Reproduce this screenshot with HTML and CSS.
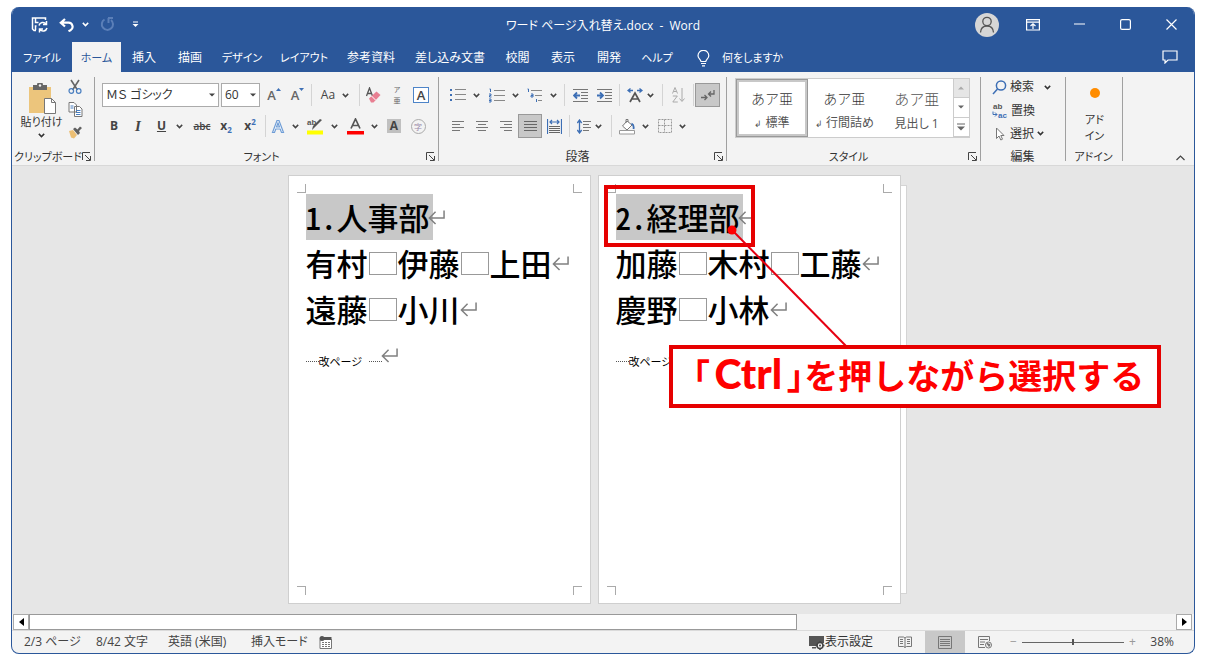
FILE: index.html
```html
<!DOCTYPE html>
<html lang="ja">
<head>
<meta charset="utf-8">
<title>ワード ページ入れ替え.docx - Word</title>
<link rel="stylesheet" href="styles.css">
</head>
<body>
<svg class="defs" aria-hidden="true">
  <symbol id="chev" viewBox="0 0 7 5"><path d="M.8 .9 3.5 3.6 6.200 .9" fill="none" stroke="currentColor" stroke-width="1.500"/></symbol>
  <symbol id="tri" viewBox="0 0 6 4"><path d="M0 .5h6L3 3.500z" fill="currentColor"/></symbol>
  <symbol id="launch" viewBox="0 0 9 9"><path d="M.5 8V.5H8M3 3l5 5M8.500 4v4.500H4" fill="none" stroke="#444"/></symbol>
  <symbol id="ret" viewBox="0 0 18 16"><path d="M17 1v8H2M8 2.500 1.500 9 8 15.500" fill="none" stroke="#808080" stroke-width="1.600"/></symbol>
</svg>
<div class="window">
  <header class="titlebar">
    <div class="quick">
      <button aria-label="上書き保存"><svg width="18" height="18" viewBox="0 0 18 18" fill="none" stroke="#fff" stroke-width="1.500"><path d="M5 14.500H3l-1.500-1.500V2h13v2M4.500 2v4.500h3M4.500 14v-4h1"/><path d="M8 9.500a4 4 0 0 1 7-1.500M15.500 5v3.500H12M16 12a4 4 0 0 1-7 1.500M8.500 16.500V13H12"/></svg></button>
      <button aria-label="元に戻す"><svg width="16" height="14" viewBox="0 0 16 14" fill="none" stroke="#fff" stroke-width="2.200"><path d="M6 1 1.800 4.700 6 8.500M2 4.700h7.500a4 4 0 0 1 2 7.500l-2 1"/></svg></button>
      <button aria-label="元に戻すの一覧"><svg class="chev"><use href="#chev"/></svg></button>
      <button aria-label="繰り返し"><svg width="15" height="15" viewBox="0 0 15 15" fill="none" stroke="#5b7fb8" stroke-width="2"><path d="M4.500 2.500a5.600 5.600 0 1 0 6.500.5M8 1h5M8.500 1v5"/></svg></button>
      <button aria-label="クイック アクセスの設定"><svg width="7" height="7" viewBox="0 0 7 7"><path d="M1 1h5" stroke="#fff"/><path d="M.5 3h6l-3 3z" fill="#fff"/></svg></button>
    </div>
    <h1 class="title">ワード ページ入れ替え.docx&nbsp; -&nbsp; Word</h1>
    <div class="controls">
      <button aria-label="アカウント"><svg width="24" height="24" viewBox="0 0 24 24"><circle cx="12" cy="12" r="12" fill="#d6d6d6"/><g fill="none" stroke="#555" stroke-width="1.300"><circle cx="12" cy="8.500" r="4.200"/><path d="M5.500 19.500c.3-4.200 2.800-6.500 6.500-6.500s6.200 2.300 6.500 6.500"/></g></svg></button>
      <button aria-label="リボンの表示オプション"><svg width="14" height="12" viewBox="0 0 14 12" fill="none" stroke="#fff" stroke-width="1.200"><path d="M.6.600h12.800v10.400H.6zM.6 3.200h12.800M7 10V5M4.500 7 7 4.800 9.500 7"/></svg></button>
      <button aria-label="最小化"><svg width="11" height="11" viewBox="0 0 11 11"><path d="M0 5h11" stroke="#fff" stroke-width="1.200"/></svg></button>
      <button aria-label="最大化"><svg width="11" height="11" viewBox="0 0 11 11"><rect x=".6" y=".6" width="9.800" height="9.800" rx="1.500" fill="none" stroke="#fff" stroke-width="1.200"/></svg></button>
      <button aria-label="閉じる"><svg width="11" height="11" viewBox="0 0 11 11"><path d="M.5.500l10 10M10.500.500l-10 10" stroke="#fff" stroke-width="1.200"/></svg></button>
    </div>
  </header>
  <nav class="tabs">
    <div class="tablist">
      <button class="kana">ファイル</button><button class="active kana">ホーム</button><button>挿入</button><button>描画</button><button class="kana">デザイン</button><button class="kana">レイアウト</button><button>参考資料</button><button>差し込み文書</button><button>校閲</button><button>表示</button><button>開発</button><button class="kana">ヘルプ</button>
      <button class="tell kana"><svg width="13" height="17" viewBox="0 0 13 17" fill="none" stroke="#fff" stroke-width="1.200"><path d="M4 11.500C3.800 9.500 1 8.500 1 5.700a5.300 5.300 0 0 1 10.800 0c0 2.800-2.800 3.800-3 5.800zM4 13.500h5M5 15.800h3"/></svg>何をしますか</button>
    </div>
    <button class="comment" aria-label="コメント"><svg width="16" height="14" viewBox="0 0 16 14" fill="none" stroke="#fff" stroke-width="1.200"><path d="M1 1h14v9H6l-3 3v-3H1z"/></svg></button>
  </nav>

  <section class="ribbon">
    <div class="group clipboard">
      <div class="clip">
        <button class="paste kana"><svg width="30" height="31" viewBox="0 0 30 31"><path d="M2 4h22v26H2z" fill="#ecc57c"/><path d="M6 2h4a3 3 0 0 1 6 0h4v5H6z" fill="#666"/><circle cx="13" cy="2.500" r="1.200" fill="#f3f3f3"/><path d="M17.500 15.500h7l4 4v11h-11z" fill="#fff" stroke="#777"/><path d="M24.500 15.500v4h4" fill="none" stroke="#777"/></svg>貼り付け<svg class="chev"><use href="#chev"/></svg></button>
        <div class="stack">
          <button aria-label="切り取り"><svg width="14" height="16" viewBox="0 0 14 16" fill="none" stroke-width="1.600"><path d="M3 1l6.500 10M11 1 4.500 11" stroke="#666"/><circle cx="3.300" cy="12" r="2.300" stroke="#4a7fc0" stroke-width="1.200"/><circle cx="10.700" cy="12" r="2.300" stroke="#4a7fc0" stroke-width="1.200"/></svg></button>
          <button aria-label="コピー"><svg width="15" height="15" viewBox="0 0 15 15" fill="#fff" stroke="#777"><path d="M1 .5h5l2.500 2.500v7H1zM6.500 4.500h5l2.500 2.500v7.500H6.500z"/><path d="M2.500 4h3M2.500 6h3M8 8.500h4.500M8 10.500h4.500M8 12.500h4.500" stroke="#4a7fc0"/></svg></button>
          <button aria-label="書式のコピー"><svg width="15" height="13" viewBox="0 0 15 13"><path d="M1 5l4-1 4 5-3 3.500-3-1z" fill="#ecbf74"/><path d="M5 3l2-1.500 2.500 2 2.500-3L14 2l-3 3 1 2-2 2z" fill="#606060"/></svg></button>
        </div>
      </div>
      <div class="glabel kana"><span>クリップボード</span><button aria-label="クリップボードの詳細"><svg class="launch"><use href="#launch"/></svg></button></div>
    </div>

    <div class="group font">
      <div class="rows">
        <div class="row font1">
          <label class="combo"><select aria-label="フォント"><option>ＭＳ ゴシック</option></select><svg class="tri"><use href="#tri"/></svg></label>
          <label class="combo"><select aria-label="フォント サイズ"><option>60</option></select><svg class="tri"><use href="#tri"/></svg></label>
          <button class="grow" aria-label="拡大">A<svg width="5" height="14" viewBox="0 0 5 14"><path d="M0 3 2.500 0 5 3z" fill="#3d6fb5"/></svg></button>
          <button class="grow" aria-label="縮小">A<svg width="5" height="14" viewBox="0 0 5 14"><path d="M0 0h5L2.500 3z" fill="#3d6fb5"/></svg></button>
          <i class="sep"></i>
          <button>Aa<svg class="chev"><use href="#chev"/></svg></button>
          <i class="sep"></i>
          <button aria-label="書式のクリア"><svg width="16" height="16" viewBox="0 0 16 16"><path d="M1.500 9 4.500 1l3 8M2.500 6.500h4" fill="none" stroke="#555" stroke-width="1.300"/><path d="M4 11.500 11.500 4.500l4 3.500L8.500 15.500H6z" fill="#e87f92"/><path d="M6.500 9l4 4" stroke="#fff"/></svg></button>
          <button class="ruby" aria-label="ルビ"><span>ア</span><span>亜</span></button>
          <button aria-label="囲み線"><span class="boxed">A</span></button>
        </div>
        <div class="row font2">
          <button class="b">B</button>
          <button class="it">I</button>
          <button class="wide"><u class="b">U</u><svg class="chev"><use href="#chev"/></svg></button>
          <button class="strike">abc</button>
          <button class="b xx">x<sub>2</sub></button>
          <button class="b xx">x<sup>2</sup></button>
          <i class="sep"></i>
          <button aria-label="文字の効果"><svg width="14" height="15" viewBox="0 0 14 15"><path d="M1.500 13.500 6 1.500h2l4.500 12h-2l-1.300-3.500H4.800l-1.300 3.500zM5.500 8h3L7 4z" fill="#fff" stroke="#6f9dd6" stroke-width="1.200"/></svg><svg class="chev"><use href="#chev"/></svg></button>
          <button aria-label="蛍光ペン"><svg width="18" height="18" viewBox="0 0 18 18"><text x="1" y="8" class="abtext">ab</text><path d="M16 3 9 10l-3 3 1-4 7-7z" fill="#555"/><path d="M1 13.500h16v4H1z" fill="#ff0"/></svg><svg class="chev"><use href="#chev"/></svg></button>
          <button aria-label="フォントの色"><svg width="17" height="17" viewBox="0 0 17 17"><path d="M4 10.500 8.500 1 13 10.500M5.500 7.500h6" fill="none" stroke="#555" stroke-width="1.700"/><path d="M0 13h17v3.500H0z" fill="#f00"/></svg><svg class="chev"><use href="#chev"/></svg></button>
          <button aria-label="網かけ"><span class="shade">A</span></button>
          <button aria-label="囲い文字"><span class="circle">字</span></button>
        </div>
      </div>
      <div class="glabel kana"><span>フォント</span><button aria-label="フォントの詳細"><svg class="launch"><use href="#launch"/></svg></button></div>
    </div>

    <div class="group para">
      <div class="rows">
        <div class="row para1">
          <button aria-label="箇条書き"><svg width="16" height="14" viewBox="0 0 16 14"><path d="M5 1.500h11M5 6.500h11M5 11.500h11" stroke="#888"/><path d="M0 1h2v2H0zM0 6h2v2H0zM0 11h2v2H0z" fill="#3d6fb5"/></svg><svg class="chev"><use href="#chev"/></svg></button>
          <button aria-label="段落番号"><svg width="16" height="15" viewBox="0 0 16 15"><path d="M5 2.500h11M5 7.500h11M5 12.500h11" stroke="#888"/><path d="M.5 1h1v3M0 6h2v1.500H.5V9h2M0 11h2v3H0M0 12.500h2" fill="none" stroke="#3d6fb5"/></svg><svg class="chev"><use href="#chev"/></svg></button>
          <button aria-label="アウトライン"><svg width="16" height="14" viewBox="0 0 16 14"><path d="M4 2.500h11M8 7.500h7M11 12.500h4" stroke="#888"/><path d="M.5 1h1v3M4 6h2v3H4V7.500h2M9.500 11v3" fill="none" stroke="#3d6fb5"/></svg><svg class="chev"><use href="#chev"/></svg></button>
          <i class="sep"></i>
          <button aria-label="インデントを減らす"><svg width="15" height="13" viewBox="0 0 15 13"><path d="M0 .5h15M8 3.500h7M8 6.500h7M8 9.500h7M0 12.500h15" stroke="#777"/><path d="M7 6.500H1.500M4 3.500l-3 3 3 3" fill="none" stroke="#3d6fb5" stroke-width="1.800"/></svg></button>
          <button aria-label="インデントを増やす"><svg width="15" height="13" viewBox="0 0 15 13"><path d="M0 .5h15M8 3.500h7M8 6.500h7M8 9.500h7M0 12.500h15" stroke="#777"/><path d="M0 6.500h5.500M3 3.500l3 3-3 3" fill="none" stroke="#3d6fb5" stroke-width="1.800"/></svg></button>
          <i class="sep"></i>
          <button class="tight" aria-label="拡張書式"><svg width="16" height="15" viewBox="0 0 16 15"><path d="M3 14 8 5l5 9M4.500 11h7" fill="none" stroke="#555" stroke-width="1.700"/><path d="M6 2.500H1M3.500 .5l-2.500 2 2.500 2M10 2.500h5M12.500.5l2.500 2-2.500 2" fill="none" stroke="#3d6fb5" stroke-width="1.300"/></svg><svg class="chev"><use href="#chev"/></svg></button>
          <i class="sep"></i>
          <button aria-label="並べ替え"><svg width="14" height="16" viewBox="0 0 14 16" fill="none" stroke="#aaa"><path d="M.5 6.500 3 .5l2.500 6M1.500 4.500h3M.8 9h4.500L.8 15h5M10 1v13M7.500 11.500 10 14.500l2.500-3"/></svg></button>
          <i class="sep"></i>
          <button class="pressed" aria-label="編集記号の表示"><svg width="14" height="12" viewBox="0 0 14 12" fill="none" stroke="#666" stroke-width="1.300"><path d="M13 1v4H8M10 2.500 7.500 5 10 7.500M0 8.500h6M3.500 6 6 8.500 3.500 11"/></svg></button>
        </div>
        <div class="row para2">
          <button aria-label="左揃え"><svg width="12" height="10" viewBox="0 0 12 10"><path d="M0 .5h12M0 3.500h8M0 6.500h12M0 9.500h8" stroke="#777"/></svg></button>
          <button aria-label="中央揃え"><svg width="12" height="10" viewBox="0 0 12 10"><path d="M0 .5h12M2 3.500h8M0 6.500h12M2 9.500h8" stroke="#777"/></svg></button>
          <button aria-label="右揃え"><svg width="12" height="10" viewBox="0 0 12 10"><path d="M0 .5h12M4 3.500h8M0 6.500h12M4 9.500h8" stroke="#777"/></svg></button>
          <button class="pressed" aria-label="両端揃え"><svg width="13" height="10" viewBox="0 0 13 10"><path d="M0 .5h13M0 3.500h13M0 6.500h13M0 9.500h13" stroke="#666"/></svg></button>
          <button aria-label="均等割り付け"><svg width="15" height="15" viewBox="0 0 15 15"><path d="M.5 0v15M14.500 0v15M3 3h9M5 1 3 3l2 2M10 1l2 2-2 2" fill="none" stroke="#3d6fb5" stroke-width="1.200"/><path d="M2 7.500h11M2 9.500h11M2 11.500h11M2 13.500h11" stroke="#666"/></svg></button>
          <i class="sep"></i>
          <button class="tight" aria-label="行間"><svg width="14" height="15" viewBox="0 0 14 15"><path d="M6 2.500h8M6 5.500h6M6 8.500h8M6 11.500h6" stroke="#777"/><path d="M2.500 1.500v12M.3 4l2.200-3 2.200 3M.3 11l2.200 3 2.200-3" fill="none" stroke="#3d6fb5" stroke-width="1.300"/></svg><svg class="chev"><use href="#chev"/></svg></button>
          <i class="sep"></i>
          <button aria-label="塗りつぶし"><svg width="16" height="17" viewBox="0 0 16 17"><path d="M3.500 8 8 3l5 4-5 5zM7 5V1.500h2V4" fill="#fff" stroke="#777"/><path d="M12.500 5.500c2 1 2.500 3 2 5.500" fill="none" stroke="#3d6fb5" stroke-width="1.800"/><path d="M.5 12.500h15v3.500H.5z" fill="#fff" stroke="#999"/></svg><svg class="chev"><use href="#chev"/></svg></button>
          <button aria-label="罫線"><svg width="14" height="14" viewBox="0 0 14 14"><path d="M.5.500h13v13H.5zM6.500 .5v13M.5 6.500h13" fill="none" stroke="#999" stroke-dasharray="2 1"/></svg><svg class="chev"><use href="#chev"/></svg></button>
        </div>
      </div>
      <div class="glabel"><span>段落</span><button aria-label="段落の詳細"><svg class="launch"><use href="#launch"/></svg></button></div>
    </div>

    <div class="group styles">
      <div class="gallery">
        <button class="style picked"><span class="sample">あア亜</span><span><small>↲</small> 標準</span></button>
        <button class="style"><span class="sample">あア亜</span><span><small>↲</small> 行間詰め</span></button>
        <button class="style"><span class="sample big">あア亜</span><span>見出し 1</span></button>
        <div class="spin">
          <button class="off" aria-label="上へ"><svg class="tri up"><use href="#tri"/></svg></button>
          <button aria-label="下へ"><svg class="tri"><use href="#tri"/></svg></button>
          <button aria-label="その他"><svg width="8" height="8" viewBox="0 0 8 8"><path d="M0 1h8" stroke="#666"/><path d="M0 3.500h8l-4 4z" fill="#666"/></svg></button>
        </div>
      </div>
      <div class="glabel kana"><span>スタイル</span><button aria-label="スタイルの詳細"><svg class="launch"><use href="#launch"/></svg></button></div>
    </div>

    <div class="group edit">
      <div class="editlist">
        <button><svg width="15" height="15" viewBox="0 0 15 15" fill="none" stroke="#3d6fb5" stroke-width="1.500"><circle cx="9" cy="5.500" r="4.600"/><path d="M5.500 9 1 14"/></svg>検索<svg class="chev far"><use href="#chev"/></svg></button>
        <button><svg width="16" height="19" viewBox="0 0 16 19"><text x="1" y="8" class="abtext">ab</text><text x="6" y="17" class="abtext blue">ac</text><path d="M1 10.500v3h4M3 11.500l2 2-2 2" fill="none" stroke="#3d6fb5"/></svg>置換</button>
        <button><svg width="15" height="14" viewBox="0 0 15 14"><path d="M4.500 1v10.500l2.500-2.500 1.800 4 1.700-.8L8.800 8.500H12z" fill="#fff" stroke="#777"/></svg>選択<svg class="chev"><use href="#chev"/></svg></button>
      </div>
      <div class="glabel"><span>編集</span></div>
    </div>
    <div class="group addin">
      <button class="addbtn kana"><i class="dot"></i><span>アド<br>イン</span></button>
      <div class="glabel kana"><span>アドイン</span></div>
    </div>
    <button class="collapse" aria-label="リボンを折りたたむ"><svg width="9" height="6" viewBox="0 0 9 6"><path d="M.5 5 4.500 1l4 4" fill="none" stroke="#444" stroke-width="1.200"/></svg></button>
  </section>

  <main class="desk">
    <article class="page">
      <i class="mark tl"></i><i class="mark tr"></i><i class="mark bl"></i><i class="mark br"></i>
      <p><span class="sel">1.人事部</span><svg class="ret over"><use href="#ret"/></svg></p>
      <p>有村<i class="sp"></i>伊藤<i class="sp"></i>上田<svg class="ret"><use href="#ret"/></svg></p>
      <p>遠藤<i class="sp"></i>小川<svg class="ret"><use href="#ret"/></svg></p>
      <p class="break"><i class="dots"></i>改ページ<i class="dots after"></i><svg class="ret up"><use href="#ret"/></svg></p>
    </article>
    <article class="page last">
      <i class="mark tl"></i><i class="mark tr"></i><i class="mark bl"></i><i class="mark br"></i>
      <p><span class="sel">2.経理部</span><svg class="ret over"><use href="#ret"/></svg></p>
      <p>加藤<i class="sp"></i>木村<i class="sp"></i>工藤<svg class="ret"><use href="#ret"/></svg></p>
      <p>慶野<i class="sp"></i>小林<svg class="ret"><use href="#ret"/></svg></p>
      <p class="break"><i class="dots"></i>改ページ</p>
      <div class="frame"></div>
      <svg class="leader" viewBox="0 0 122 122"><path d="M5 5l114 116" stroke="#e60012" stroke-width="2"/><circle cx="5" cy="5" r="4.500" fill="#f00"/></svg>
      <div class="callout"><span class="key">「<b>Ctrl</b>」</span>を押しながら選択する</div>
    </article>
    <div class="behind"></div>
  </main>

  <div class="hscroll">
    <button aria-label="左へスクロール"><svg width="5" height="8" viewBox="0 0 5 8"><path d="M5 0v8L0 4z"/></svg></button>
    <div class="track"><div class="thumb"></div></div>
    <button aria-label="右へスクロール"><svg width="5" height="8" viewBox="0 0 5 8"><path d="M0 0v8l5-4z"/></svg></button>
  </div>

  <footer class="status">
    <span class="s1">2/3 ページ</span><span class="s1">8/42 文字</span><span class="s2">英語 (米国)</span><span class="s3">挿入モード</span>
    <svg width="13" height="13" viewBox="0 0 13 13"><path d="M1 3.500h11.500v9H1z" fill="#fff" stroke="#777"/><path d="M5 1h7.500v3H5z" fill="#555"/><circle cx="3" cy="2.500" r="2.500" fill="#555"/><path d="M3 6.500h8M3 8.500h8M3 10.500h8" stroke="#777" stroke-dasharray="2 1"/></svg>
    <div class="views">
      <button class="disp"><svg width="16" height="15" viewBox="0 0 16 15"><path d="M0 1h15v7h-4l-4 3H0zM3 12h4v1.500H3z" fill="#555"/><circle cx="11" cy="10.500" r="3" fill="#f3f3f3" stroke="#444" stroke-width="1.500"/><circle cx="11" cy="10.500" r="1" fill="#444"/><path d="M11 6v2M11 13v2M6.500 10.500h2M13.500 10.500h2" stroke="#444" stroke-width="1.500"/></svg>表示設定</button>
      <button aria-label="閲覧モード"><svg width="14" height="12" viewBox="0 0 14 12" fill="none" stroke="#777"><path d="M.5 1h5L7 2l1.500-1h5v9.500h-5L7 11.500 5.500 10.500h-5zM7 2v9.500M2 3.500h3M2 5.500h3M2 7.500h3M9 3.500h3M9 5.500h3M9 7.500h3"/></svg></button>
      <button class="current" aria-label="印刷レイアウト"><svg width="14" height="13" viewBox="0 0 14 13" fill="none" stroke="#777"><path d="M.5.500h13v12H.5zM2 3.500h10M2 5.500h10M2 7.500h10M2 9.500h10"/></svg></button>
      <button aria-label="Web レイアウト"><svg width="14" height="13" viewBox="0 0 14 13" fill="none" stroke="#777"><path d="M7 11.500H.5v-11h11V5M2 3.500h8M2 6h5M2 8.500h4"/><circle cx="10.500" cy="9" r="3"/><path d="M9 7.500l3 1-1 2z" fill="#777"/></svg></button>
      <span class="pm">−</span>
      <input type="range" aria-label="ズーム" min="0" max="100" value="50">
      <span class="pm">+</span>
      <span class="pct">38%</span>
    </div>
  </footer>
</div>
</body>
</html>
```
FILE: styles.css
```css
* { box-sizing: border-box; }
body {
  margin: 0;
  padding: 7px 14px 12px 11px;
  min-height: 100vh;
  display: flex;
  background: #fff;
  color: #444;
  font: 12px/16px "Open Sans", "Noto Sans CJK JP", sans-serif;
  font-feature-settings: "palt";
}
button, select, input { font: inherit; font-feature-settings: inherit; color: inherit; margin: 0; }
button {
  border: 0; padding: 0; background: none;
  display: flex; align-items: center; justify-content: center;
  white-space: nowrap;
}
svg { display: block; flex: none; }
.kana { font-size: 11px; }
.defs { position: absolute; width: 0; height: 0; }
.chev { width: 7px; height: 5px; }
.tri { width: 6px; height: 4px; }
.tri.up { transform: rotate(180deg); }
.launch { width: 9px; height: 9px; }

.window {
  flex: 1; min-width: 0;
  display: flex; flex-direction: column;
  border: 1px solid #2b579a; border-top: 0;
  border-radius: 8px; overflow: hidden;
  background: #f3f3f3;
}

/* Title bar and tabs */
.titlebar {
  height: 35px; background: #2b579a; color: #fff;
  display: grid; grid-template-columns: 1fr auto 1fr; align-items: center;
}
.quick { display: grid; grid-template-columns: 26px 28px 8px 36px 20px; padding-left: 15px; }
.title { margin: 0; padding-top: 2px; font-size: 12px; font-weight: 400; }
.controls { display: grid; grid-template-columns: repeat(5, 46px); justify-content: end; }
.controls button { height: 32px; }
.tabs { height: 30px; background: #2b579a; color: #fff; display: flex; justify-content: space-between; }
.tablist { display: grid; grid-template-columns: 60px 49px 46px 46px 58px 66px 68px 90px 45px 46px 46px 50px 116px; }
.tablist button { padding-top: 2px; }
.tabs .active { background: #f3f3f3; color: #2b579a; }
.tell { gap: 12px; }
.comment { width: 48px; }

/* Ribbon */
.ribbon { display: flex; border-bottom: 1px solid #d8d8d8; }
.group {
  flex: none; height: 93px; position: relative;
  display: flex; flex-direction: column; justify-content: space-between;
}
.group::after {
  content: ""; position: absolute; right: 0; top: 5px; bottom: 4px;
  width: 1px; background: #a0a0a0;
}
.clipboard { width: 83px; }
.font { width: 344px; }
.para { width: 288px; }
.styles { width: 254px; }
.edit { width: 85px; }
.addin { width: 57px; }
.glabel { display: grid; grid-template-columns: 1fr auto; align-items: center; height: 17px; padding: 0 4px 0 2px; text-align: center; white-space: nowrap; color: #333; }
.collapse { margin-left: auto; align-self: flex-end; width: 28px; height: 14px; }
.clip { display: flex; padding: 7px 0 0 6px; }
.paste { flex-direction: column; width: 47px; color: #333; }
.paste .chev { margin-top: 3px; }
.stack { display: grid; grid-template-rows: 16px 29px 17px; width: 20px; align-items: center; }
.rows { display: grid; gap: 7px; padding: 11px 7px 0; }
.para .rows { padding-left: 6px; }
.row { display: grid; height: 24px; align-items: center; }
.row button { gap: 7px; height: 24px; }
.row .tight { gap: 4px; }
.row .wide { gap: 10px; }
.sep { width: 1px; height: 22px; background: #d4d4d4; justify-self: center; }
.font1 { grid-template-columns: 119px 41px 24px 23px 4px 44px 4px 24px 24px 24px; }
.font2 { grid-template-columns: 24px 24px 40px 24px 24px 24px 6px 34px 40px 40px 24px 24px; }
.para1 { grid-template-columns: 40px 38px 38px 7px 24px 24px 6px 36px 9px 24px 4px 25px; }
.para2 { grid-template-columns: 25px 24px 24px 24px 24px 6px 34px 10px 36px 40px; }
.combo { position: relative; display: block; margin-right: 2px; }
.combo select {
  appearance: none; width: 100%; height: 24px; padding: 0 3px;
  border: 1px solid #ababab; border-radius: 0; background: #fff; color: #333; outline: 0;
}
.combo .tri { position: absolute; right: 4px; top: 10px; }
.grow { font-size: 13px; font-weight: 600; color: #666; }
.row .grow { gap: 0; }
.b { font-weight: 700; }
.it { font-family: "Liberation Serif", serif; font-size: 15px; font-style: italic; font-weight: 700; }
.strike { font-size: 10px; font-weight: 600; text-decoration: line-through; }
.row .xx { gap: 0; }
.xx sub, .xx sup { font-size: 8px; line-height: 8px; color: #3d6fb5; }
.xx sub { align-self: flex-end; margin-bottom: 4px; }
.xx sup { align-self: flex-start; margin-top: 4px; }
.row .ruby { flex-direction: column; gap: 0; font-family: "Noto Sans CJK JP", sans-serif; font-size: 7px; line-height: 11px; color: #666; }
.boxed { width: 16px; height: 16px; line-height: 14px; border: 1px solid #4d84c8; background: #fff; font-size: 13px; font-weight: 600; }
.shade { width: 14px; height: 14px; line-height: 14px; background: #c0c0c0; font-weight: 700; }
.circle { width: 15px; height: 15px; line-height: 13px; border: 1px solid #aaa; border-radius: 50%; font-size: 8px; color: #98a; }
.abtext { font: 700 8px "Liberation Sans", sans-serif; fill: #555; }
.abtext.blue { fill: #3d6fb5; }
.pressed { background: #c8c8c8; outline: 1px solid #999; outline-offset: -1px; }

.gallery { display: grid; grid-template-columns: 72px 72px 72px 16px; justify-content: space-between; margin: 6px 11px 0 8px; height: 60px; background: #fff; border: 1px solid #ccc; }
.style { flex-direction: column; gap: 9px; padding-top: 6px; color: #555; }
.style small { font-size: 9px; }
.sample { font-size: 14px; color: #333; font-family: "Noto Sans CJK JP", sans-serif; font-weight: 300; font-feature-settings: normal; }
.sample.big { font-size: 15px; color: #555; }
.picked { border: 3px solid #c8c8c8; outline: 1px solid #999; outline-offset: -1px; }
.spin { display: grid; grid-template-rows: 1fr 1fr 1fr; color: #666; }
.spin button { border: 1px solid #ccc; border-width: 0 0 1px 1px; }
.off { background: #e6e6e6; }
.spin .off { color: #aaa; }
.editlist { display: grid; grid-template-rows: 24px 23px 23px; padding: 3px 0 0 11px; color: #333; }
.editlist button { justify-content: flex-start; gap: 3px; }
.editlist .far { margin-left: 7px; }
.addbtn { flex-direction: column; gap: 14px; padding-top: 16px; color: #333; }
.dot { width: 10px; height: 10px; border-radius: 50%; background: #ff8c00; }

/* Document area */
.desk { flex: 1; display: flex; justify-content: center; padding: 9px 12px 10px 0; background: #e6e6e6; }
.page {
  position: relative; width: 303px; min-height: 429px; padding: 18px 17px 17px;
  background: #fff; border: 1px solid #cfcfcf;
  color: #000; font: 500 31px/46px "Noto Sans CJK JP", sans-serif; font-feature-settings: "hwid";
}
.page.last { margin-left: 7px; z-index: 1; }
.page p { margin: 0; height: 46px; display: flex; align-items: center; white-space: nowrap; }
.behind { width: 6px; margin: 10px 0; background: #fff; border: 1px solid #d4d4d4; border-left: 0; }
.sel { background: #c8c8c8; padding-right: 3px; height: 46px; }
.sp { width: 28px; height: 23px; margin: 0 1px; border: 1px solid #999; }
.ret { width: 17px; height: 16px; }
.ret.over { margin-left: -5px; }
.ret.up { margin-bottom: 12px; margin-left: -1px; }
.page .break { padding-top: 12px; font-size: 11px; font-weight: 400; font-feature-settings: "palt"; }
.dots { width: 13px; border-top: 1px dotted #555; }
.dots.after { margin-left: 7px; }
.mark { position: absolute; width: 9px; height: 9px; border: 0 solid #aaa; }
.tl { left: 8px; top: 8px; border-width: 0 1px 1px 0; }
.tr { right: 8px; top: 8px; border-width: 0 0 1px 1px; }
.bl { left: 8px; bottom: 8px; border-width: 1px 1px 0 0; }
.br { right: 8px; bottom: 8px; border-width: 1px 0 0 1px; }

/* Annotation over the second page */
.frame { position: absolute; left: 5px; top: 9px; width: 151px; height: 62px; border: 4px solid #e60000; }
.leader { position: absolute; left: 128px; top: 49px; width: 122px; height: 122px; }
.callout {
  position: absolute; left: 70px; top: 169px; height: 63px; padding: 0 13px 0 20px;
  border: 4px solid #e60000; background: #fff; color: #f00;
  font-size: 34px; line-height: 50px; font-weight: 700; white-space: nowrap;
  font-feature-settings: normal;
}
.key { font-feature-settings: "palt"; }
.key b { font-family: Lato, sans-serif; font-size: 41px; padding: 0 5px; }

/* Scroll bar and status bar */
.hscroll { display: flex; height: 16px; padding: 0 2px 0 1px; }
.hscroll button { width: 16px; background: #fff; border: 1px solid #aaa; }
.track { flex: 1; }
.thumb { width: 67%; height: 16px; background: #fff; border: 1px solid #999; }
.status { display: flex; align-items: center; height: 23px; padding: 0 20px 0 12px; border-top: 1px solid #dadada; }
.s1 { width: 72px; }
.s2 { width: 83px; }
.s3 { width: 68px; }
.views { margin-left: auto; display: flex; align-items: center; height: 22px; }
.views button { width: 40px; height: 22px; }
.views .disp { width: 88px; color: #333; }
.views .current { background: #c8c8c8; }
.pm { width: 17px; text-align: center; color: #999; }
.pct { width: 33px; text-align: right; }
input[type="range"] { appearance: none; width: 102px; height: 12px; background: linear-gradient(#666, #666) center / 100% 1px no-repeat; }
input[type="range"]::-webkit-slider-thumb { appearance: none; width: 2px; height: 6px; background: #555; }
```
